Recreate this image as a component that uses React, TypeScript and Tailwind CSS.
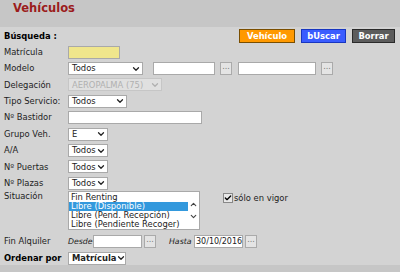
import { ChevronDown, ChevronUp, Check } from "lucide-react"

const font = { fontFamily: "'DejaVu Sans', Verdana, sans-serif" }

function Select({ value, w, disabled, bold }: { value: string; w: string; disabled?: boolean; bold?: boolean }) {
  return (
    <div
      className={`flex h-[13px] items-center justify-between border pl-[3px] pr-[1px] ${w} ${
        disabled ? "border-[#c6c6c6] bg-[#e0e0e0] text-[#b0b0b0]" : "border-[#a9a9a9] bg-white text-[#222]"
      } ${bold ? "font-bold" : ""}`}
    >
      <span className="whitespace-nowrap leading-none">{value}</span>
      <ChevronDown className="h-[10px] w-[10px] shrink-0" strokeWidth={3} />
    </div>
  )
}

function Input({ w, value, yellow }: { w: string; value?: string; yellow?: boolean }) {
  return (
    <div
      className={`flex h-[13px] items-center border border-[#a9a9a9] px-[1px] text-[8px] leading-none text-[#222] ${w} ${
        yellow ? "bg-[#f0e68c]" : "bg-white"
      }`}
    >
      {value}
    </div>
  )
}

function Dots() {
  return (
    <div className="flex h-[13px] w-[12px] items-center justify-center border border-[#aaa] bg-[#e4e4e4] pb-[3px] text-[8px] leading-none text-[#7a7a7a]">
      ...
    </div>
  )
}

function Row({ label, children, bold }: { label: string; children: React.ReactNode; bold?: boolean }) {
  return (
    <div className="flex h-[16.4px] items-center">
      <div className={`w-[64px] shrink-0 whitespace-nowrap ${bold ? "font-bold text-black" : ""}`}>{label}</div>
      <div className="flex items-center">{children}</div>
    </div>
  )
}

export default function App() {
  return (
    <div className="h-[272px] w-[400px] overflow-hidden bg-[#c6c6c6] text-[8.4px] text-[#222]" style={font}>
      {/* Title */}
      <div className="h-[27px] pl-[13px] pt-[1px]">
        <h1 className="text-[11.5px] font-bold leading-[14px] text-[#9b1c1c]">Vehículos</h1>
      </div>

      {/* Panel */}
      <div className="h-[238px] bg-[#d3d3d3] pl-[4px] pt-[2px]">
        <div className="flex h-[14px] items-center">
          <span className="font-bold text-black">Búsqueda :</span>
          <div className="ml-auto mr-[5px] flex gap-[6px]">
            <button className="h-[14px] w-[56px] border border-[#7a4e00] bg-[#ff9900] text-[8.4px] font-bold leading-none text-white">
              Vehículo
            </button>
            <button className="h-[14px] w-[45px] border border-[#1836c0] bg-[#3a5cff] text-[8.4px] font-bold leading-none text-white">
              bUscar
            </button>
            <button className="h-[14px] w-[43px] border border-[#2a2a2a] bg-[#5c5c5c] text-[8.4px] font-bold leading-none text-white">
              Borrar
            </button>
          </div>
        </div>

        <div className="mt-[1px]">
          <Row label="Matrícula">
            <Input w="w-[52px]" yellow />
          </Row>
          <Row label="Modelo">
            <Select value="Todos" w="w-[75px]" />
            <div className="ml-[10px]">
              <Input w="w-[62px]" />
            </div>
            <div className="ml-[5px]">
              <Dots />
            </div>
            <div className="ml-[6px]">
              <Input w="w-[78px]" />
            </div>
            <div className="ml-[5px]">
              <Dots />
            </div>
          </Row>
          <Row label="Delegación">
            <Select value="AEROPALMA (75)" w="w-[94px]" disabled />
          </Row>
          <Row label="Tipo Servicio:">
            <Select value="Todos" w="w-[59px]" />
          </Row>
          <Row label="Nº Bastidor">
            <Input w="w-[134px]" />
          </Row>
          <Row label="Grupo Veh.">
            <Select value="E" w="w-[40px]" />
          </Row>
          <Row label="A/A">
            <Select value="Todos" w="w-[40px]" />
          </Row>
          <Row label="Nº Puertas">
            <Select value="Todos" w="w-[40px]" />
          </Row>
          <Row label="Nº Plazas">
            <Select value="Todos" w="w-[40px]" />
          </Row>

          {/* Situación */}
          <div className="flex">
            <div className="w-[64px] shrink-0 leading-[9px]">Situación</div>
            <div className="-mt-[1px] flex h-[39px] w-[132px] border border-[#a9a9a9] bg-white">
              <div className="flex-1 pt-[1px] leading-[9px]">
                <div className="pl-[2px]">Fin Renting</div>
                <div className="bg-[#3399dd] pl-[2px] text-white">Libre (Disponible)</div>
                <div className="whitespace-nowrap pl-[2px]">Libre (Pend. Recepción)</div>
                <div className="whitespace-nowrap pl-[2px]">Libre (Pendiente Recoger)</div>
              </div>
              <div className="flex w-[11px] flex-col items-center justify-center gap-[3px] text-[#444]">
                <ChevronUp className="h-[9px] w-[9px]" strokeWidth={3} />
                <ChevronDown className="h-[9px] w-[9px]" strokeWidth={3} />
              </div>
            </div>
            <div className="ml-[23px] mt-[1px] flex h-[11px] items-center gap-[1px]">
              <div className="flex h-[10px] w-[10px] items-center justify-center border border-[#888] bg-[#e8e8e8]">
                <Check className="h-[8px] w-[8px] text-black" strokeWidth={4} />
              </div>
              <span>sólo en vigor</span>
            </div>
          </div>

          <div className="mt-[4px]">
            <Row label="Fin Alquiler">
              <span className="w-[25px] whitespace-nowrap text-[7.8px] italic">Desde</span>
              <Input w="w-[49px]" />
              <div className="ml-[2px]">
                <Dots />
              </div>
              <span className="ml-[13px] w-[25px] whitespace-nowrap text-[7.8px] italic">Hasta</span>
              <Input w="w-[49px]" value="30/10/2016" />
              <div className="ml-[2px]">
                <Dots />
              </div>
            </Row>
            <Row label="Ordenar por" bold>
              <Select value="Matrícula" w="w-[58px]" bold />
            </Row>
          </div>
        </div>
      </div>
    </div>
  )
}
